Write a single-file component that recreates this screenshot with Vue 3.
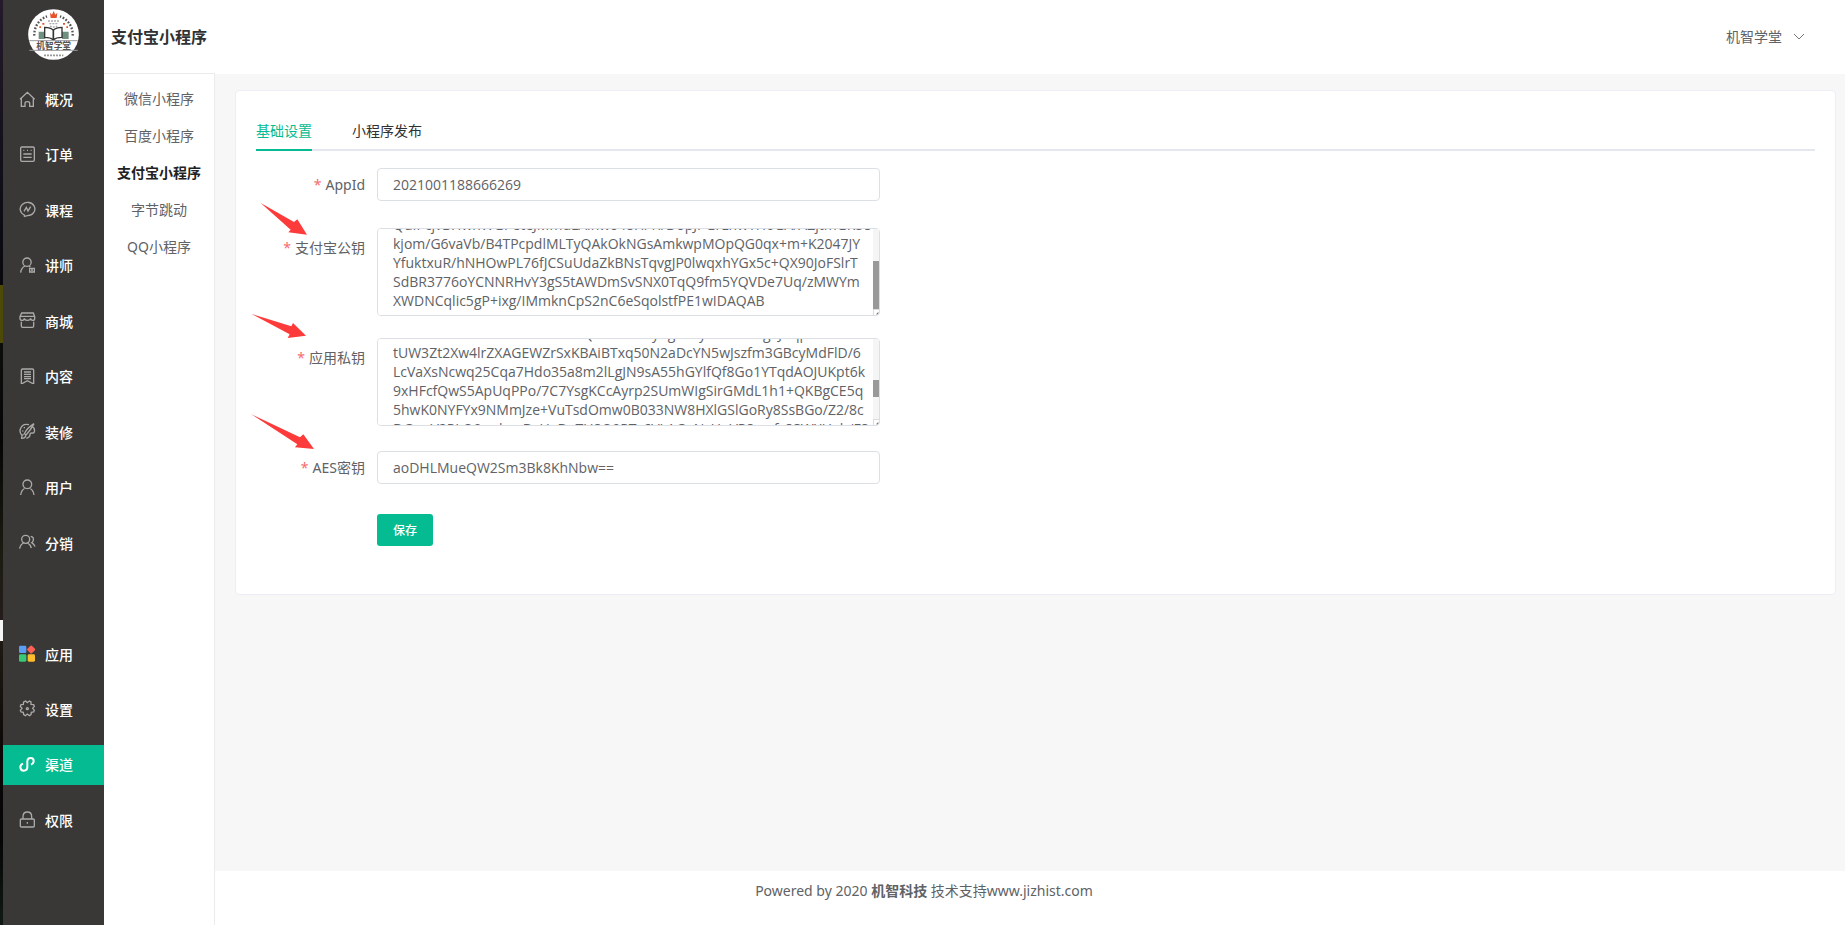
<template>
  <div class="page">
    <div class="edge"></div>

    <aside class="sidebar">
      <div class="logo">
        <svg viewBox="0 0 153 153" width="51" height="51">
          <circle cx="76.500" cy="76.500" r="76" fill="#fff" />
          <path d="M19 80a58 58 0 0 1 38-58M134 80a58 58 0 0 0-38-58" fill="none" stroke="#555" stroke-width="7" stroke-dasharray="5 5" />
          <path d="M66 11l6 6 5-11 5 11 6-6-2 16H68z" fill="#e5532d" />
          <path d="M43 42h6v5h-6zM34 52h5v5h-5zM105 42h6v5h-6zM115 52h5v5h-5z" fill="#e5532d" />
          <path d="M60 36h34M64 44h26M66 51q10 6 22 0" fill="none" stroke="#aaa" stroke-width="4" stroke-dasharray="6 3" />
          <path d="M32 68h20v22H32zM102 68h20v22h-20z" fill="#6f9080" />
          <path d="M50 55q18 0 26 9 8-9 26-9v30q-18 0-26 8-8-8-26-8z" fill="#fff" stroke="#333" stroke-width="4" />
          <path d="M76 64v28" stroke="#333" stroke-width="5" />
          <path d="M4 95h145M4 124h145" stroke="#999" stroke-width="3" />
          <text x="77" y="119" class="logo-name">机智学堂</text>
          <path d="M48 139h58" stroke="#999" stroke-width="5" stroke-dasharray="6 3" />
        </svg>
      </div>
      <nav class="menu">
        <template v-for="item in menus" :key="item.name">
          <a v-if="item.name" href="#" class="menu-item" :class="{ active: item.active }">
            <svg v-if="item.apps" class="menu-icon" viewBox="0 0 51 51">
              <rect x="0" y="2" width="22" height="22" rx="4" fill="#5b9cf5" />
              <rect x="27" y="4" width="19" height="19" rx="3" fill="#fd6155" transform="rotate(45 36.500 13.500)" />
              <rect x="0" y="28" width="22" height="22" rx="4" fill="#37c976" />
              <rect x="26" y="28" width="22" height="22" rx="4" fill="#fcbc2b" />
            </svg>
            <svg v-else class="menu-icon line" viewBox="0 0 51 51"><path :d="item.icon" /></svg>
            <span>{{ item.name }}</span>
          </a>
          <div v-else class="menu-item"></div>
        </template>
      </nav>
    </aside>

    <div class="container">
      <header class="header">
        <h1 class="title">支付宝小程序</h1>
        <button type="button" class="user">
          机智学堂
          <svg viewBox="0 0 12 12" width="12" height="12"><path d="M1 4l5 5 5-5" /></svg>
        </button>
      </header>

      <div class="body">
        <nav class="sub-menu">
          <a v-for="name in channels" :key="name" href="#" :class="{ current: name === channel }">{{ name }}</a>
        </nav>

        <div class="content">
          <main class="main">
            <section class="card">
              <div class="tabs">
                <button
                  v-for="tab in tabs"
                  :key="tab"
                  type="button"
                  class="tab"
                  :class="{ active: tab === activeTab }"
                  @click="activeTab = tab"
                >{{ tab }}</button>
              </div>

              <form class="form" @submit.prevent>
                <div class="form-item">
                  <label for="appId">AppId</label>
                  <input id="appId" v-model="form.appId" type="text">
                </div>
                <div class="form-item">
                  <label for="publicKey">支付宝公钥</label>
                  <div class="textarea-box">
                    <textarea
                      id="publicKey"
                      ref="publicKeyRef"
                      v-model="form.publicKey"
                      spellcheck="false"
                      @scroll="updateBar($event.target, publicBar)"
                    ></textarea>
                    <div class="scrollbar">
                      <div class="thumb" :style="{ top: publicBar.top + '%', height: publicBar.height + '%' }"></div>
                    </div>
                    <svg class="corner" viewBox="0 0 6 6"><path d="M3 5h1v-1h1v-1" /></svg>
                  </div>
                  <svg class="arrow arrow-public" viewBox="120 396 144 102"><path d="M122 399L222 456 232 448 261 494 205 487 212 479z" /></svg>
                </div>
                <div class="form-item">
                  <label for="privateKey">应用私钥</label>
                  <div class="textarea-box">
                    <textarea
                      id="privateKey"
                      ref="privateKeyRef"
                      v-model="form.privateKey"
                      spellcheck="false"
                      @scroll="updateBar($event.target, privateBar)"
                    ></textarea>
                    <div class="scrollbar">
                      <div class="thumb" :style="{ top: privateBar.top + '%', height: privateBar.height + '%' }"></div>
                    </div>
                    <svg class="corner" viewBox="0 0 6 6"><path d="M3 5h1v-1h1v-1" /></svg>
                  </div>
                  <svg class="arrow arrow-private" viewBox="93 39 168 78"><path d="M95 42L214 79 219 69 258 107 203 114 209 103z" /></svg>
                </div>
                <div class="form-item">
                  <label for="aesKey">AES密钥</label>
                  <input id="aesKey" v-model="form.aesKey" type="text">
                  <svg class="arrow arrow-aes" viewBox="90 339 195 111"><path d="M93 342L240 412 250 403 282 447 225 442 232 433z" /></svg>
                </div>
                <div class="form-item">
                  <button type="submit" class="save">保存</button>
                </div>
              </form>
            </section>
          </main>

          <footer class="footer">Powered by 2020 <b>机智科技</b> 技术支持www.jizhist.com</footer>
        </div>
      </div>
    </div>
  </div>
</template>

<script setup>
import { onMounted, reactive, ref } from 'vue';

const menus = [
  { name: '概况', icon: 'M3 25L25 4 47 25M7 22V46H18V37Q18 32 25 32T32 37V46H43V22' },
  { name: '订单', icon: 'M9 3H42Q46 3 46 7V42Q46 46 42 46H9Q5 46 5 42V7Q5 3 9 3zM13 13H16M24 13H27M35 13H38M13 24H38M13 34H38' },
  { name: '课程', icon: 'M16 47V42A22 20 0 1 1 26 44Q22 44 16 47M15 31L22 19 27 30 35 17' },
  { name: '讲师', icon: 'M24 3A12 12 0 1 1 24 28 12 12 0 1 1 24 3M5 47Q6 33 18 27M30 27L34 30M32 34H46V45H32zM36 39H42' },
  { name: '商城', icon: 'M8 3H43L47 14V20Q47 25 41 25 35 25 35 19 35 25 25 25 16 25 16 19 16 25 10 25 3 25 3 20V14zM4 13H47M7 29V42Q7 46 11 46H40Q44 46 44 42V29' },
  { name: '内容', icon: 'M11 3H40Q44 3 44 7V46H40L25 38 11 46H7V7Q7 3 11 3zM15 12H36M15 19H36M15 26H36M15 32H36' },
  { name: '装修', icon: 'M30 5Q10 0 4 18 1 28 8 36M40 10Q50 18 45 29 41 31 36 30 32 32 33 36 32 44 22 46M45 2Q24 15 16 32L21 36Q35 22 45 2M14 34Q7 36 8 46 19 46 20 38M14 14H18M10 24H13' },
  { name: '用户', icon: 'M25 3A13 13 0 1 1 25 29 13 13 0 1 1 25 3M5 48Q7 32 19 27M31 27Q43 32 45 48' },
  { name: '分销', icon: 'M20 4A12 12 0 1 1 20 28 12 12 0 1 1 20 4M2 44Q4 31 14 27M26 27Q35 32 37 42M35 7Q45 9 43 19 42 23 38 26 46 31 48 38' },
  { name: '' },
  { name: '应用', apps: true },
  { name: '设置', icon: 'M20 3L25 8 31 3 36 6 36 13 44 14 46 19 41 25 46 31 44 36 37 37 36 44 31 47 25 42 19 47 14 44 13 37 6 36 4 31 9 25 4 19 6 14 13 13 14 6zM25 23A3 3 0 1 1 25 29 3 3 0 1 1 25 23' },
  { name: '渠道', icon: 'M12 23Q4 26 4 34 5 44 14 44 25 44 25 33V17Q25 6 35 6 44 6 44 15 44 23 36 26', active: true },
  { name: '权限', icon: 'M7 24H43Q46 24 46 27V45Q46 48 43 48H7Q4 48 4 45V27Q4 24 7 24M12 24V17Q12 3 25 3T38 17V24M25 33V38' }
];

const channels = ['微信小程序', '百度小程序', '支付宝小程序', '字节跳动', 'QQ小程序'];
const channel = '支付宝小程序';

const tabs = ['基础设置', '小程序发布'];
const activeTab = ref('基础设置');

const form = reactive({
  appId: '2021001188666269',
  publicKey: '\n'.repeat(2) + [
    'QuIPcjvBHwhWGPeteJMmdLAlhw048H/Yl/DopJPGrLnwYH6GA/AZjtmGK58',
    'kjom/G6vaVb/B4TPcpdlMLTyQAkOkNGsAmkwpMOpQG0qx+m+K2047JY',
    'YfuktxuR/hNHOwPL76fJCSuUdaZkBNsTqvgJP0lwqxhYGx5c+QX90JoFSlrT',
    'SdBR3776oYCNNRHvY3gS5tAWDmSvSNX0TqQ9fm5YQVDe7Uq/zMWYm',
    'XWDNCqlic5gP+ixg/IMmknCpS2nC6eSqolstfPE1wIDAQAB'
  ].join('\n'),
  privateKey: '\n'.repeat(10) + [
    'MIIEvAIBADANBkihkiG9w0BAQEFAASCByAgEkoyABAoIBAgEJAqp',
    'tUW3Zt2Xw4lrZXAGEWZrSxKBAiBTxq50N2aDcYN5wJszfm3GBcyMdFlD/6',
    'LcVaXsNcwq25Cqa7Hdo35a8m2lLgJN9sA55hGYlfQf8Go1YTqdAOJUKpt6k',
    '9xHFcfQwS5ApUqPPo/7C7YsgKCcAyrp2SUmWIgSirGMdL1h1+QKBgCE5q',
    '5hwK0NYFYx9NMmJze+VuTsdOmw0B033NW8HXlGSlGoRy8SsBGo/Z2/8c',
    'DGnuV2PLO9swkenDzUaDeTU8O9PTc6VLAGeNzUoVP8nwfs8SWXUab/F8'
  ].join('\n') + '\n'.repeat(5),
  aesKey: 'aoDHLMueQW2Sm3Bk8KhNbw=='
});

const publicKeyRef = ref(null);
const privateKeyRef = ref(null);
const publicBar = reactive({ top: 0, height: 100 });
const privateBar = reactive({ top: 0, height: 100 });

const updateBar = (el, bar) => {
  bar.top = el.scrollTop / el.scrollHeight * 100;
  bar.height = el.clientHeight / el.scrollHeight * 100;
};

onMounted(() => {
  publicKeyRef.value.scrollTop = 57;
  privateKeyRef.value.scrollTop = 210;
  updateBar(publicKeyRef.value, publicBar);
  updateBar(privateKeyRef.value, privateBar);
});
</script>

<style>
body {
  margin: 0;
}
</style>

<style scoped>
.page {
  display: flex;
  min-height: 100vh;
  background-color: #fff;
  font-family: "Noto Sans", "Noto Sans CJK SC", sans-serif;
  font-size: 14px;
  color: #606266;
}
.page * {
  box-sizing: border-box;
}
a {
  color: inherit;
  text-decoration: none;
}
button, input, textarea {
  font-family: inherit;
  margin: 0;
}
.edge {
  flex: none;
  width: 3px;
  background: linear-gradient(#241a2a, #0c0c14 220px, #08080c 285px, #4c4a06 285px, #4c4a06 343px, #0c0e0c 343px, #050505 440px, #1c1c12 560px, #241c1c 620px, #f5f5f5 620px, #f5f5f5 641px, #1e1a12 641px, #0a0606 760px, #050505 840px, #101a14);
}
.sidebar {
  flex: none;
  width: 101px;
  display: flex;
  flex-direction: column;
  background-color: #3a3836;
}
.logo {
  height: 80px;
  padding-top: 9px;
  text-align: center;
}
.logo-name {
  font-size: 26px;
  font-weight: bold;
  fill: #555;
  text-anchor: middle;
}
.menu {
  flex: 1;
  display: flex;
  flex-direction: column;
  justify-content: space-between;
  padding-bottom: 84px;
}
.menu-item {
  display: flex;
  align-items: center;
  gap: 9px;
  height: 40px;
  padding: 0 0 2px 16px;
  font-weight: 500;
  color: #fff;
}
.menu-item.active {
  background-color: #05bb91;
}
.menu-icon {
  width: 17px;
  height: 17px;
}
.menu-icon.line {
  fill: none;
  stroke: #aaa;
  stroke-width: 4;
}
.active .menu-icon.line {
  stroke: #fff;
  stroke-width: 6;
}
.container {
  flex: 1;
  min-width: 0;
  display: flex;
  flex-direction: column;
}
.header {
  display: flex;
  justify-content: space-between;
  align-items: center;
  height: 73px;
  padding: 0 40px 2px 7px;
}
.title {
  margin: 0;
  font-size: 16px;
  font-weight: bold;
  color: #303133;
}
.user {
  display: flex;
  align-items: center;
  gap: 11px;
  padding: 0;
  border: none;
  background: none;
  font-size: 14px;
  color: #606266;
}
.user path {
  fill: none;
  stroke: #777;
}
.body {
  flex: 1;
  display: flex;
}
.sub-menu {
  flex: none;
  width: 111px;
  display: flex;
  flex-direction: column;
  padding-top: 6px;
  border-top: 1px solid #ebebeb;
  border-right: 1px solid #ebebeb;
  line-height: 37px;
  text-align: center;
}
.sub-menu .current {
  font-weight: bold;
  color: #222;
}
.content {
  flex: 1;
  min-width: 0;
  display: flex;
  flex-direction: column;
  padding-top: 1px;
}
.main {
  flex: 1;
  padding: 16px 9px 16px 20px;
  background-color: #f7f7f7;
}
.card {
  padding: 20px;
  border: 1px solid #ebeef5;
  border-radius: 4px;
  background-color: #fff;
}
.tabs {
  display: flex;
  gap: 40px;
  height: 40px;
  margin-bottom: 14px;
  box-shadow: inset 0 -2px #e4e7ed;
}
.tab {
  padding: 0 0 2px;
  border: none;
  background: none;
  font-size: 14px;
  color: #303133;
}
.tab.active {
  color: #05bb91;
  box-shadow: inset 0 -2px #05bb91;
}
.form {
  width: 40%;
}
.form-item {
  position: relative;
  display: flex;
  align-items: flex-start;
  min-height: 41px;
  margin-bottom: 22px;
  padding-left: 121px;
}
.form-item label {
  width: 121px;
  margin-left: -121px;
  padding-right: 12px;
  line-height: 40px;
  text-align: right;
}
.form-item label::before {
  content: "*";
  margin-right: 4px;
  color: #f56c6c;
}
input, textarea {
  flex: 1;
  min-width: 0;
  border: 1px solid #dcdfe6;
  border-radius: 4px;
  outline: none;
  background-color: #fff;
  font-family: "Open Sans", "Noto Sans CJK SC", sans-serif;
  font-size: 14px;
  color: #606266;
}
input {
  height: 33px;
  margin-top: 3px;
  padding: 0 15px;
}
.textarea-box {
  position: relative;
  flex: 1;
  min-width: 0;
}
textarea {
  display: block;
  width: 100%;
  height: 88px;
  padding: 5px 15px;
  line-height: 19px;
  white-space: pre;
  overflow-x: hidden;
  overflow-y: scroll;
  scrollbar-width: none;
  resize: none;
}
.scrollbar {
  position: absolute;
  top: 1px;
  right: 1px;
  bottom: 7px;
  width: 6px;
  background-color: #f5f5f5;
}
.thumb {
  position: absolute;
  width: 100%;
  background-color: #999;
}
.corner {
  position: absolute;
  right: 1px;
  bottom: 1px;
  width: 6px;
  height: 6px;
  border-top: 1px solid #dcdcdc;
  border-left: 1px solid #dcdcdc;
  fill: none;
  stroke: #555;
}
.save {
  height: 32px;
  margin-top: 3px;
  padding: 0 16px;
  border: none;
  border-radius: 3px;
  background-color: #05bb91;
  font-size: 12px;
  font-weight: 500;
  color: #fff;
}
/* 红色箭头提示 */
.arrow {
  position: absolute;
  fill: #fd3b3b;
  pointer-events: none;
}
.arrow-public {
  left: 4px;
  top: -26px;
  width: 48px;
}
.arrow-private {
  left: -5px;
  top: -25px;
  width: 56px;
}
.arrow-aes {
  left: -6px;
  top: -35px;
  width: 65px;
}
.footer {
  height: 54px;
  padding-right: 212px;
  line-height: 40px;
  text-align: center;
}
</style>
